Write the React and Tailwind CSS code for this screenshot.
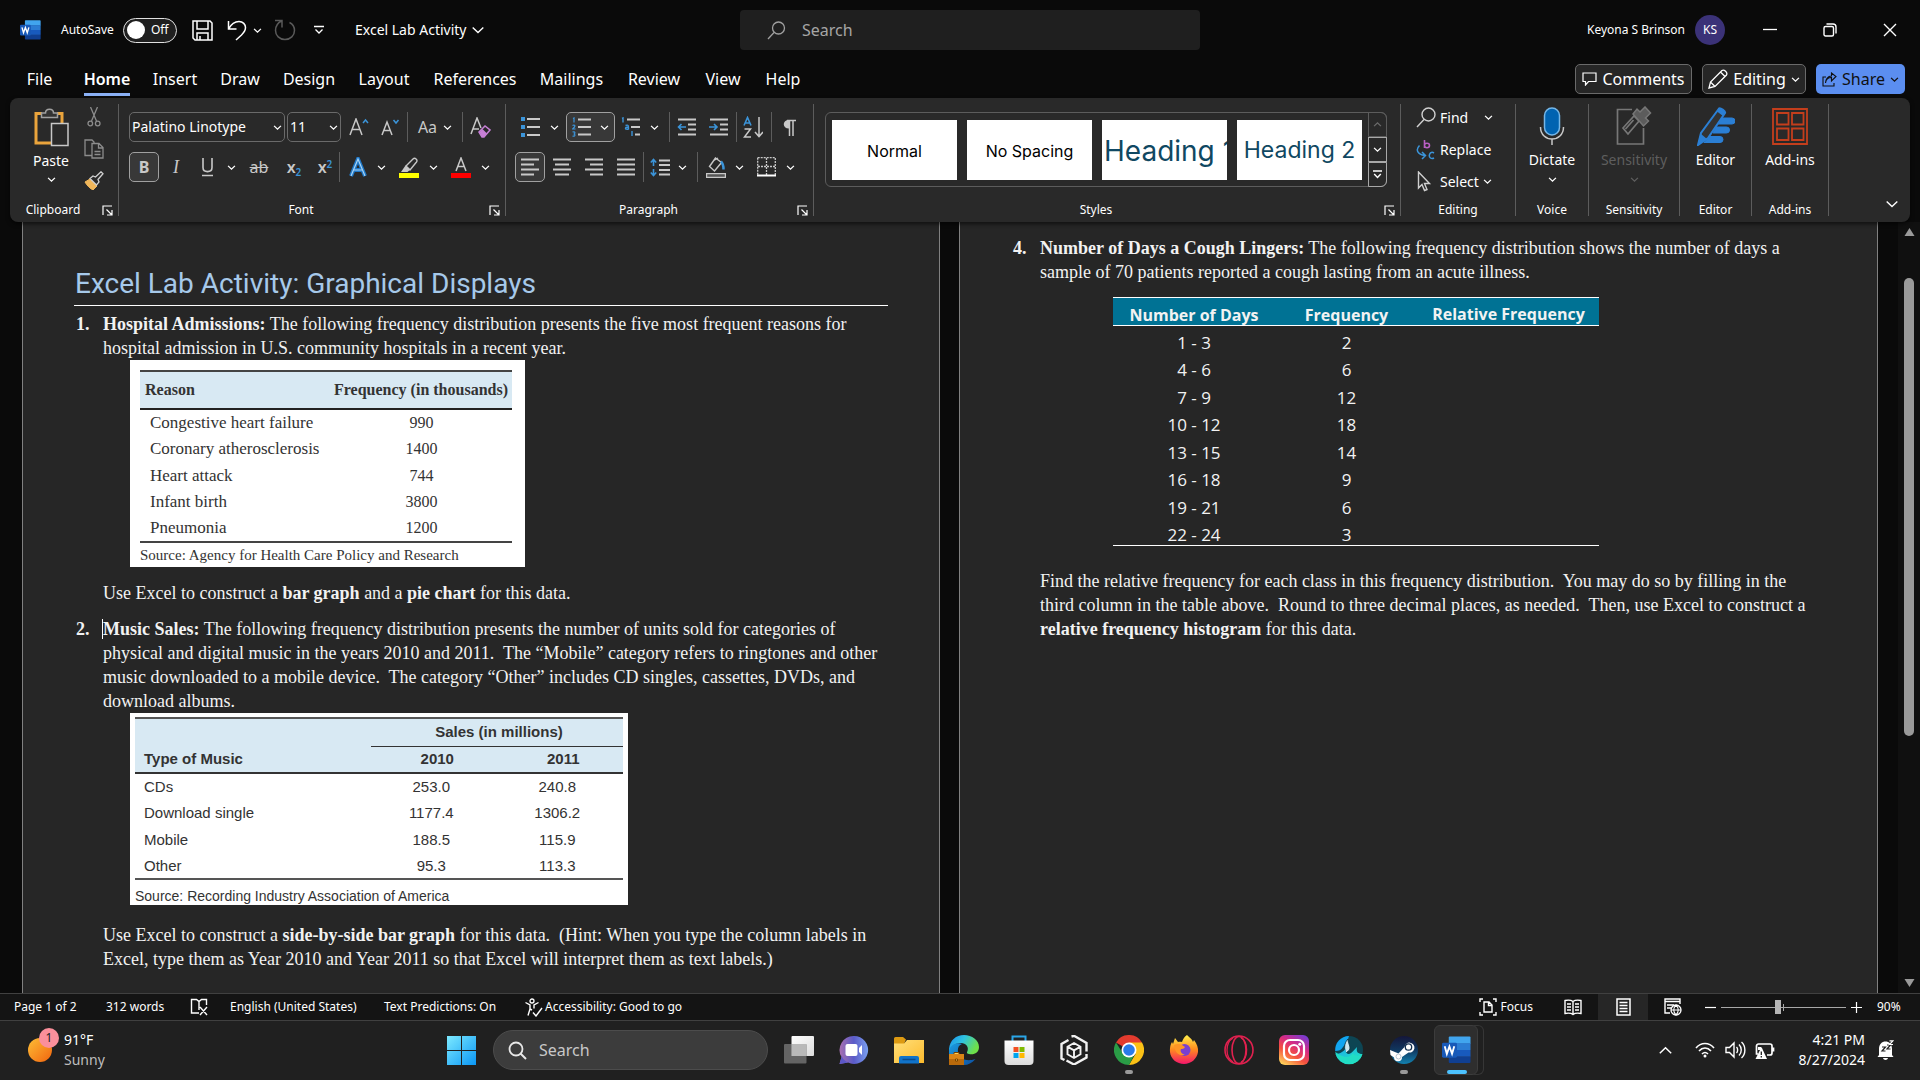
import React from "react";

/* ---------- small shared pieces ---------- */

const Svg = ({ w, h, vb, children, className = "" }) => (
  <svg
    width={w}
    height={h}
    viewBox={vb || `0 0 ${w} ${h}`}
    fill="none"
    stroke="currentColor"
    className={`shrink-0 ${className}`}
    aria-hidden="true"
  >
    {children}
  </svg>
);

const Chevron = ({ w = 9, className = "" }) => (
  <Svg w={w} h={w} vb="0 0 10 10" className={className}>
    <path d="M1.2 3.2 5 6.8l3.8-3.6" strokeWidth={w > 10 ? "1" : "1.5"} />
  </Svg>
);

const Rule = ({ className = "" }) => <span className={`h-[30px] w-px shrink-0 bg-[#5c5c5c] ${className}`} />;

const Tool = ({ label, className = "w-8", boxed = false, children }) => (
  <button
    type="button"
    aria-label={label}
    className={`flex h-[30px] shrink-0 items-center justify-center text-[#c8c8c8] ${
      boxed ? "rounded-[5px] border border-[#a0a0a0] bg-[#383838]" : ""
    } ${className}`}
  >
    {children}
  </button>
);

const Launcher = ({ label }) => (
  <button type="button" aria-label={label} className="flex w-[22px] shrink-0 items-center justify-center text-white">
    <Svg w={11} h={11}>
      <path d="M1 10V1h9M4.500 4.500l5 5M10 5v5H5" strokeWidth="1.2" />
    </Svg>
  </button>
);

const Group = ({ name, launcher, className = "", children }) => (
  <section className={`flex h-[112px] shrink-0 flex-col justify-between border-r border-[#5c5c5c] ${className}`}>
    <div>{children}</div>
    <div className="flex items-center">
      <span className="flex-1 text-center text-xs leading-3 text-white">{name}</span>
      {launcher && <Launcher label={`${name} settings`} />}
    </div>
  </section>
);

const WordIcon = ({ w, h }) => (
  <Svg w={w} h={h} vb="0 0 30 28">
    <g stroke="none">
      <path d="M8 0h20.500a1 1 0 0 1 1 1v6.500H7V1a1 1 0 0 1 1-1z" fill="#41a5ee" />
      <path d="M7 7h22.500v7H7z" fill="#2b7cd3" />
      <path d="M7 14h22.500v7H7z" fill="#185abd" />
      <path d="M7 21h22.500v5.500a1 1 0 0 1-1 1H8a1 1 0 0 1-1-1z" fill="#103f91" />
      <rect x="0" y="6.500" width="15.500" height="15.500" rx="1.500" fill="#1859b8" />
      <path d="M2.800 10.200 5 18l2.700-7.600L10.400 18l2.300-7.800" stroke="#fff" strokeWidth="1.900" fill="none" />
    </g>
  </Svg>
);

/* ---------- title bar ---------- */

function TitleBar() {
  return (
    <header className="grid h-[60px] shrink-0 grid-cols-[740px_1fr_1fr] items-center text-white">
      <div className="flex items-center pl-5">
        <WordIcon w={21} h={20} />
        <label className="ml-5 flex items-center text-xs">
          <span className="w-[62px]">AutoSave</span>
          <input type="checkbox" className="peer sr-only" />
          <span className="flex h-[25px] w-[54px] items-center gap-[6px] rounded-full border border-[#e0e0e0] bg-[#1f1f1f] pl-[3px] text-xs">
            <span className="size-[18px] rounded-full bg-white" />
            Off
          </span>
        </label>
        <button type="button" aria-label="Save" className="ml-[15px]">
          <Svg w={21} h={21}>
            <path d="M1 1h17l2 2v17H3l-2-2zM5 1v8h11V1M5 20v-7h11v7M8 20v-4" strokeWidth="1.500" />
          </Svg>
        </button>
        <button type="button" aria-label="Undo" className="ml-[14px] flex items-center gap-[6px]">
          <Svg w={20} h={21}>
            <path d="M1.500 1v8h8M1.500 9C4 4.500 8 1.500 12 1.500c4 0 6.500 3 6.500 6 0 3-1.500 5-4 7.500L9 20" strokeWidth="1.500" />
          </Svg>
          <Chevron w={9} />
        </button>
        <button type="button" aria-label="Redo" className="ml-3 text-[#5a5a5a]">
          <Svg w={22} h={22}>
            <path d="M1 1.500h7v7M7.500 2C3.500 4 1.500 7.500 1.500 11.500c0 5 4 9 9.500 9s9.500-4 9.500-9c0-3.500-2-6.500-5-8" strokeWidth="1.500" />
          </Svg>
        </button>
        <button type="button" aria-label="Customize toolbar" className="ml-[18px]">
          <Svg w={10} h={10}>
            <path d="M0 1.500h10M1.500 4.500 5 8l3.500-3.500" strokeWidth="1.300" />
          </Svg>
        </button>
        <button type="button" className="ml-[31px] flex items-center gap-[5px] text-sm">
          Excel Lab Activity
          <Chevron w={14} />
        </button>
      </div>
      <label className="flex h-10 w-[460px] items-center gap-4 rounded-[4px] bg-[#1f1f1f] pl-[27px] text-[#a0a0a0]">
        <Svg w={19} h={19}>
          <circle cx="11.500" cy="7" r="6" strokeWidth="1.300" />
          <path d="M7 11.500 1 18" strokeWidth="1.300" />
        </Svg>
        <input
          aria-label="Search"
          placeholder="Search"
          className="min-w-0 flex-1 bg-transparent text-base outline-none placeholder:text-[#a6a6a6]"
        />
      </label>
      <div className="flex items-center justify-end pr-[23px]">
        <span className="text-xs">Keyona S Brinson</span>
        <span className="ml-[10px] flex size-[30px] items-center justify-center rounded-full bg-[#3b3278] text-xs">KS</span>
        <button type="button" aria-label="Minimize" className="ml-[38px]">
          <Svg w={14} h={14}>
            <path d="M0 6.500h14" strokeWidth="1.300" />
          </Svg>
        </button>
        <button type="button" aria-label="Restore" className="ml-[46px]">
          <Svg w={14} h={14}>
            <rect x="1" y="3.500" width="9.500" height="9.500" rx="1.500" strokeWidth="1.400" />
            <path d="M3.500 1h6.500a3 3 0 0 1 3 3v6.500" strokeWidth="1.400" />
          </Svg>
        </button>
        <button type="button" aria-label="Close" className="ml-[46px]">
          <Svg w={14} h={14}>
            <path d="m1 1 12 12M13 1 1 13" strokeWidth="1.400" />
          </Svg>
        </button>
      </div>
    </header>
  );
}

/* ---------- tab row ---------- */

const TABS = [
  ["File", "w-[71px]"],
  ["Home", "w-[64px]"],
  ["Insert", "w-[72px]"],
  ["Draw", "w-[58px]"],
  ["Design", "w-[80px]"],
  ["Layout", "w-[70px]"],
  ["References", "w-[112px]"],
  ["Mailings", "w-[81px]"],
  ["Review", "w-[84px]"],
  ["View", "w-[54px]"],
  ["Help", "w-[66px]"],
];

function TabRow() {
  return (
    <nav className="flex h-[38px] shrink-0 items-center justify-between pr-[15px] pl-1 text-white">
      <div className="flex">
        {TABS.map(([t, w]) => (
          <button key={t} type="button" className={`flex flex-col items-center pt-[3px] text-base leading-7 ${w}`}>
            <span className={t === "Home" ? "border-b-[3px] border-[#8ab0f5] font-semibold" : "border-b-[3px] border-transparent"}>
              {t}
            </span>
          </button>
        ))}
      </div>
      <div className="flex gap-[10px] text-base">
        <button type="button" className="flex h-[30px] w-[117px] items-center justify-center gap-[5px] rounded-[5px] border border-[#6a6a6a] bg-[#262626]">
          <Svg w={15} h={14}>
            <path d="M1 1h13v8.500H6.500L3.500 13V9.500H1z" strokeWidth="1.200" />
          </Svg>
          <span>Comments</span>
        </button>
        <button type="button" className="flex h-[30px] w-[104px] items-center justify-center gap-[5px] rounded-[5px] border border-[#6a6a6a] bg-[#262626]">
          <Svg w={20} h={20}>
            <path d="m1 19 1.500-6L14 1.500c2-1.500 6 2 4.500 4.500L7 17.500zM2.500 13 7 17.500M12.500 3 17 7.500" strokeWidth="1.300" />
          </Svg>
          <span>Editing</span>
          <Chevron w={9} />
        </button>
        <button type="button" className="flex h-[30px] w-[89px] items-center justify-center gap-[5px] rounded-[5px] bg-[#5b8ef0] text-[#101010]">
          <Svg w={15} h={15}>
            <path d="M4 5H1v9h11v-3M3.500 11c.5-4 3-5.500 6-5.500V9L14 4.500 9.500 1v3C6 4 3.500 7 3.500 11z" strokeWidth="1.100" />
          </Svg>
          <span>Share</span>
          <Chevron w={9} />
        </button>
      </div>
    </nav>
  );
}

/* ---------- ribbon ---------- */

const ACCENT = "#3b94d9";

const lines = (rows) =>
  rows.map(([x1, x2], i) => <path key={i} d={`M${x1} ${i * 5 + 1.5}H${x2}`} strokeWidth="2" />);

const Align = ({ rows }) => (
  <Svg w={18} h={18}>
    {lines(rows)}
  </Svg>
);

function ClipboardGroup() {
  return (
    <Group name="Clipboard" launcher className="w-[109px]">
      <div className="flex pl-[19px] pt-[3px]">
        <button type="button" className="flex w-[44px] flex-col items-center text-sm text-white">
          <Svg w={36} h={40}>
            <path d="M9 6.500H3v29.500h15M24 6.500h5V16" stroke="#eaa43c" strokeWidth="3" />
            <path d="M8.500 10.500V6h4c0-5 8-5 8 0h4v4.500z" stroke="#a0a0a0" strokeWidth="1.500" fill="#333" />
            <rect x="18.500" y="16.500" width="16.500" height="22" stroke="#c8c8c8" strokeWidth="1.500" fill="#292929" />
          </Svg>
          <span className="mt-1 leading-5">Paste</span>
          <Chevron w={9} className="mt-1" />
        </button>
        <div className="flex w-[41px] flex-col items-center gap-3 text-[#8c8c8c]">
          <button type="button" aria-label="Cut">
            <Svg w={14} h={20}>
              <path d="M3.500 0 9.500 14M10.500 0 4.500 14" strokeWidth="1.300" />
              <circle cx="3.300" cy="16.500" r="2.300" strokeWidth="1.300" />
              <circle cx="10.700" cy="16.500" r="2.300" strokeWidth="1.300" />
            </Svg>
          </button>
          <button type="button" aria-label="Copy">
            <Svg w={20} h={20}>
              <path d="M8 16.500H1V1h7l2 2v2M8 4.500h7l4 4V19H8zM14.500 4.500V9H19M10.500 12.500h6M10.500 15.500h6" strokeWidth="1.300" />
            </Svg>
          </button>
          <button type="button" aria-label="Format painter">
            <Svg w={20} h={19}>
              <path d="m1 11 5-3 7 7-4 4c-2-1-6-4-8-8z" fill="#f0b65a" stroke="#f0b65a" />
              <path d="m6 7.500 3-2.500 2.500 1L17 .8l2 2-5 5.700 1 2.500-2.500 3z" stroke="#d0d0d0" strokeWidth="1.300" fill="#292929" />
            </Svg>
          </button>
        </div>
      </div>
    </Group>
  );
}

function Combo({ label, value, className, chev }) {
  return (
    <label className={`relative flex h-[30px] items-center rounded-[5px] border border-[#6a6a6a] ${className}`}>
      <select
        aria-label={label}
        className="h-full w-full appearance-none bg-transparent pl-[2px] text-sm text-white outline-none"
        defaultValue={value}
      >
        <option>{value}</option>
      </select>
      <Chevron w={9} className={`pointer-events-none absolute text-white ${chev}`} />
    </label>
  );
}

function FontGroup() {
  return (
    <Group name="Font" launcher className="w-[387px]">
      <div className="flex flex-col gap-[10px] pt-2 pl-[10px]">
        <div className="flex items-center">
          <Combo label="Font name" value="Palatino Linotype" className="w-[156px]" chev="right-[2px]" />
          <Combo label="Font size" value="11" className="ml-0.5 w-[54px]" chev="right-[2px]" />
          <Tool label="Increase font size" className="w-9">
            <Svg w={20} h={18}>
              <path d="m1 17 6-16 6 16M3.200 11.500h7.600" strokeWidth="1.500" />
              <path d="m14 5 2.500-3L19 5" stroke={ACCENT} strokeWidth="1.500" />
            </Svg>
          </Tool>
          <Tool label="Decrease font size" className="w-7">
            <Svg w={20} h={18}>
              <path d="M1 17 6 4l5 13M2.800 12.500h6.400" strokeWidth="1.500" />
              <path d="m12.500 2 2.500 3 2.500-3" stroke={ACCENT} strokeWidth="1.500" />
            </Svg>
          </Tool>
          <Rule className="ml-0.5" />
          <Tool label="Change case" className="w-[54px] gap-[6px]">
            <span className="text-base">Aa</span>
            <Chevron w={9} className="text-white" />
          </Tool>
          <Rule />
          <Tool label="Clear formatting" className="w-[34px]">
            <Svg w={21} h={21}>
              <path d="m1 17 6-16 4 10M3 12h6" strokeWidth="1.500" />
              <path d="m9 15 6-6 5 4-6 7h-2z" stroke="#c77fd6" strokeWidth="1.500" />
              <path d="m9.500 15 3-3 4.500 4.500-3 3.500h-2z" fill="#c77fd6" stroke="none" />
            </Svg>
          </Tool>
        </div>
        <div className="flex items-center">
          <Tool label="Bold" boxed className="w-[30px]">
            <span className="text-base font-bold">B</span>
          </Tool>
          <Tool label="Italic" className="w-[34px]">
            <span className="font-['Liberation_Serif',serif] text-lg italic">I</span>
          </Tool>
          <Tool label="Underline" className="w-7">
            <Svg w={13} h={20}>
              <path d="M2 1v9.500c0 5.500 9 5.500 9 0V1M1 18.500h11" strokeWidth="1.600" />
            </Svg>
          </Tool>
          <Tool label="Underline options" className="w-5 text-white">
            <Chevron />
          </Tool>
          <Tool label="Strikethrough" className="w-9">
            <span className="text-base line-through">ab</span>
          </Tool>
          <Tool label="Subscript" className="w-[34px]">
            <span className="text-base font-semibold">
              x<sub className="text-[10px] text-[#3b94d9]">2</sub>
            </span>
          </Tool>
          <Tool label="Superscript" className="w-7">
            <span className="text-base font-semibold">
              x<sup className="text-[10px] text-[#3b94d9]">2</sup>
            </span>
          </Tool>
          <Rule />
          <Tool label="Text effects" className="w-9">
            <Svg w={18} h={20}>
              <path d="m2 19 7-17 7 17M5 13h8" stroke="#1f78c8" strokeWidth="4" />
              <path d="m2 19 7-17 7 17M5 13h8" stroke="#a8d4f5" strokeWidth="1.200" />
            </Svg>
          </Tool>
          <Tool label="Text effects options" className="w-[10px] text-white">
            <Chevron />
          </Tool>
          <Tool label="Highlight colour" className="ml-1 w-[38px]">
            <Svg w={20} h={21}>
              <path d="m7 9 7-7c2-2 5 1 3.500 3L11 13z" strokeWidth="1.400" />
              <path d="m6.500 8.500 5 4-3 2.500H2z" fill="currentColor" stroke="none" />
              <path d="M0 16h20v5H0z" fill="#ff0" stroke="none" />
            </Svg>
          </Tool>
          <Tool label="Highlight options" className="w-[10px] text-white">
            <Chevron />
          </Tool>
          <Tool label="Font colour" className="ml-1 w-[38px]">
            <Svg w={20} h={21}>
              <path d="m5 14 5-13 5 13M6.800 9.500h6.400" strokeWidth="1.500" />
              <path d="M0 16h20v5H0z" fill="#f00" stroke="none" />
            </Svg>
          </Tool>
          <Tool label="Font colour options" className="w-[10px] text-white">
            <Chevron />
          </Tool>
        </div>
      </div>
    </Group>
  );
}

function ParagraphGroup() {
  return (
    <Group name="Paragraph" launcher className="w-[308px]">
      <div className="flex flex-col gap-[10px] pt-2 pl-[9px]">
        <div className="flex items-center">
          <Tool label="Bullets" className="w-[30px]">
            <Svg w={19} h={20}>
              <path d="M0 2h4M0 10h4M0 18h4" stroke={ACCENT} strokeWidth="4" />
              <path d="M6 2h13M6 10h13M6 18h13" strokeWidth="2" />
            </Svg>
          </Tool>
          <Tool label="Bullet options" className="w-[18px] text-white">
            <Chevron />
          </Tool>
          <Tool label="Numbering" boxed className="ml-[3px] w-[49px] gap-[9px]">
            <Svg w={19} h={20}>
              <path d="M1 1.500 2 1v4.500M.5 8.500c1.500-1 3 0 2 1.500L.5 12h3M.5 15c3-1 3 2 1 2 2 0 2 3-1 2" stroke={ACCENT} strokeWidth="1.200" />
              <path d="M6 2.500h13M6 10h13M6 17.500h13" strokeWidth="2" />
            </Svg>
            <Chevron className="text-white" />
          </Tool>
          <Tool label="Multilevel list" className="w-[31px]">
            <Svg w={20} h={20}>
              <path d="M1 1.500 2 1v4.500M4.500 8.500c3-1 3 0 3 3.500-4 1-4-2 0-2M11 11.500v0M11 14v5" stroke={ACCENT} strokeWidth="1.400" />
              <path d="M6 2.500h13M10 10h9M14 17.500h5" strokeWidth="2" />
            </Svg>
          </Tool>
          <Tool label="Multilevel options" className="w-4 text-white">
            <Chevron />
          </Tool>
          <Rule className="ml-[7px]" />
          <Tool label="Decrease indent" className="w-8">
            <Svg w={19} h={18}>
              <path d="M1 1.500h18M11 6.500h8M11 11.500h8M1 16.500h18" strokeWidth="2" />
              <path d="M9 9H1.500M4.500 6l-3 3 3 3" stroke={ACCENT} strokeWidth="1.600" />
            </Svg>
          </Tool>
          <Tool label="Increase indent" className="w-8">
            <Svg w={19} h={18}>
              <path d="M1 1.500h18M11 6.500h8M11 11.500h8M1 16.500h18" strokeWidth="2" />
              <path d="M0 9h8M5 6l3 3-3 3" stroke={ACCENT} strokeWidth="1.600" />
            </Svg>
          </Tool>
          <Rule className="ml-0.5" />
          <Tool label="Sort" className="w-8">
            <Svg w={20} h={22}>
              <path d="m1 9.500 3.500-8 3.500 8M2.300 7h4.500" stroke={ACCENT} strokeWidth="1.600" />
              <path d="M1.500 13h6L1.500 21h6.500M16 1v19M12 16l4 4.500 4-4.500" strokeWidth="1.500" />
            </Svg>
          </Tool>
          <Rule className="ml-0.5" />
          <Tool label="Show formatting marks" className="w-[34px]">
            <Svg w={14} h={17}>
              <path d="M7 1C0 1 0 9.500 7 9.500z" fill="currentColor" stroke="none" />
              <path d="M5 1.500h9M7.500 1v16M11 1v16" strokeWidth="1.500" />
            </Svg>
          </Tool>
        </div>
        <div className="flex items-center">
          <Tool label="Align left" boxed className="w-[30px]">
            <Align rows={[[0, 18], [0, 13], [0, 18], [0, 13]]} />
          </Tool>
          <Tool label="Center" className="w-[34px]">
            <Align rows={[[0, 18], [2, 16], [0, 18], [2, 16]]} />
          </Tool>
          <Tool label="Align right" className="w-[30px]">
            <Align rows={[[0, 18], [5, 18], [0, 18], [5, 18]]} />
          </Tool>
          <Tool label="Justify" className="w-[34px]">
            <Align rows={[[0, 18], [0, 18], [0, 18], [0, 18]]} />
          </Tool>
          <Rule />
          <Tool label="Line spacing" className="w-[31px]">
            <Svg w={20} h={19}>
              <path d="M9 2.500h11M9 7h11M9 12h11M9 16.500h11" strokeWidth="2" />
              <path d="M3.500 2v6M3.500 11v6M.8 4.500 3.500 1.500 6.200 4.500M.8 14.500l2.700 3 2.700-3" stroke={ACCENT} strokeWidth="1.600" />
            </Svg>
          </Tool>
          <Tool label="Line spacing options" className="w-[14px] text-white">
            <Chevron />
          </Tool>
          <Rule className="ml-2" />
          <Tool label="Shading" className="w-[35px]">
            <Svg w={20} h={21}>
              <path d="m9.500 1-6 8.500 5 4.500 7-8.500zM7 4l5-3" strokeWidth="1.400" />
              <path d="M15 4.500c2 2 2.500 5 2.500 8" stroke={ACCENT} strokeWidth="2.500" />
              <path d="M.6 16.600h18.800v3.800H.6z" fill="#555" strokeWidth="1.200" />
            </Svg>
          </Tool>
          <Tool label="Shading options" className="w-3 text-white">
            <Chevron />
          </Tool>
          <Tool label="Borders" className="ml-0.5 w-[38px]">
            <Svg w={19} h={20}>
              <path d="M.7.700h17.600V18M.7.700V18M9.500 1v17M1 9.500h17" strokeWidth="1.300" strokeDasharray="2 1" />
              <path d="M0 18.500h19" stroke="#fff" strokeWidth="2" />
            </Svg>
          </Tool>
          <Tool label="Border options" className="w-[10px] text-white">
            <Chevron />
          </Tool>
        </div>
      </div>
    </Group>
  );
}

const StyleCard = ({ className, children }) => (
  <button
    type="button"
    className={`h-[60px] min-w-0 flex-1 overflow-hidden bg-white px-[2px] pt-[2px] font-[Inter,sans-serif] whitespace-nowrap ${className}`}
  >
    {children}
  </button>
);

function StylesGroup() {
  return (
    <Group name="Styles" launcher className="min-w-[400px] flex-1">
      <div className="mt-2 mr-[13px] ml-[11px] flex h-[75px] rounded-[6px] border border-[#5c5c5c]">
        <div className="flex min-w-0 flex-1 items-center gap-[10px] px-[6px]">
          <StyleCard className="text-base text-black">Normal</StyleCard>
          <StyleCard className="text-base text-black">No Spacing</StyleCard>
          <StyleCard className="text-left text-[28px] text-[#104862]">Heading 1</StyleCard>
          <StyleCard className="text-[23px] text-[#104862]">Heading 2</StyleCard>
        </div>
        <div className="-my-px -mr-px flex w-[19px] flex-col text-white">
          <button type="button" aria-label="Previous styles" className="flex flex-1 items-center justify-center rounded-tr-[6px] border border-[#5c5c5c] text-[#6a6a6a]">
            <Chevron className="rotate-180" />
          </button>
          <button type="button" aria-label="Next styles" className="flex flex-1 items-center justify-center border border-[#a8a8a8]">
            <Chevron />
          </button>
          <button type="button" aria-label="More styles" className="flex flex-1 items-center justify-center rounded-br-[6px] border border-[#a8a8a8]">
            <Svg w={9} h={9}>
              <path d="M0 1h9M1.200 4 4.500 7.500 7.800 4" strokeWidth="1.400" />
            </Svg>
          </button>
        </div>
      </div>
    </Group>
  );
}

function EditingGroup() {
  return (
    <Group name="Editing" className="w-[115px]">
      <div className="flex flex-col gap-3 pl-[15px] text-sm leading-5 text-white">
        <button type="button" className="flex h-5 items-center pt-[7px]">
          <Svg w={20} h={21} className="text-[#d0d0d0]">
            <circle cx="12.500" cy="7.500" r="6.500" strokeWidth="1.400" />
            <path d="M8 12.500 1 20" strokeWidth="1.400" />
          </Svg>
          <span className="ml-1">Find</span>
          <Chevron className="ml-4" />
        </button>
        <button type="button" className="flex h-5 items-center pt-[7px]">
          <Svg w={20} h={22}>
            <path d="M8.500 1v8M8.500 6.500c0-3 5-3 5 0s-5 3-5 0" stroke="#b95fc4" strokeWidth="1.600" />
            <path d="M3.500 6.500C-.5 10.500 1 15.500 9 16.500M6 13l3.500 3.500L6 20M18 14c-4-2.500-6 3-3.500 5 1 .8 2.500.6 3.500 0" stroke={ACCENT} strokeWidth="1.500" />
          </Svg>
          <span className="ml-1">Replace</span>
        </button>
        <button type="button" className="flex h-5 items-center pt-[7px]">
          <Svg w={20} h={21} className="text-[#d0d0d0]">
            <path d="M2.500 1v16l3.500-3.500 2.500 6 2.500-1-2.500-6h5z" strokeWidth="1.400" />
          </Svg>
          <span className="ml-1">Select</span>
          <Chevron className="ml-1" />
        </button>
      </div>
    </Group>
  );
}

const BigTool = ({ label, dim, chev, icon }) => (
  <button
    type="button"
    className={`flex w-full flex-col items-center pt-[2px] text-sm ${dim ? "text-[#5e5e5e]" : "text-white"}`}
  >
    {icon}
    <span className="mt-1 leading-5">{label}</span>
    {chev && <Chevron className="mt-[5px]" />}
  </button>
);

function Ribbon() {
  return (
    <div className="relative z-10 mx-[10px] flex h-[124px] shrink-0 items-start rounded-lg bg-[#292929] pt-[6px] shadow-[0_2px_4px_rgba(0,0,0,0.6)]">
      <ClipboardGroup />
      <FontGroup />
      <ParagraphGroup />
      <StylesGroup />
      <EditingGroup />
      <Group name="Voice" className="w-[73px]">
        <BigTool
          label="Dictate"
          chev
          icon={
            <Svg w={26} h={40}>
              <rect x="5.500" y="2" width="15" height="27" rx="7.500" fill="#0063b1" stroke="#75b6e7" strokeWidth="1.500" />
              <path d="M1.500 21c0 16 23 16 23 0M13 33v6" stroke="#c8c8c8" strokeWidth="1.500" />
            </Svg>
          }
        />
      </Group>
      <Group name="Sensitivity" className="w-[91px]">
        <BigTool
          label="Sensitivity"
          dim
          chev
          icon={
            <Svg w={36} h={40} className="text-[#777]">
              <path d="M16 3.500H1.500V38h26V22" strokeWidth="1.700" />
              <path d="m7 22 11-12 5 5-11 13zM9.500 23l8-9" strokeWidth="1.700" />
              <path d="m17 8 4-5 3 3 5-5 5.500 6-5 5 3 3-5 5z" fill="#5c5c5c" strokeWidth="1.500" />
            </Svg>
          }
        />
      </Group>
      <Group name="Editor" className="w-[72px]">
        <BigTool
          label="Editor"
          icon={
            <Svg w={38} h={40}>
              <path d="M24 12h11a3 3 0 0 1 0 6H21zM19 21h10.500a3 3 0 0 1 0 6H16zM13 30.500h10a3 3 0 0 1 0 6H7z" fill="#2b7fd4" stroke="#2b7fd4" />
              <path d="M1 39 4 27 22 2.500c1-1.200 7 2.500 6 4.500L11 32z" fill="#333" stroke="#2b7fd4" strokeWidth="2" />
              <path d="m1 39 3-11 6 5zM22 2.500c1-1.200 7 2.500 6 4.500l-2 3-6-4.500z" fill="#2b7fd4" stroke="none" />
            </Svg>
          }
        />
      </Group>
      <Group name="Add-ins" className="w-[77px]">
        <BigTool
          label="Add-ins"
          icon={
            <Svg w={36} h={40} className="text-[#c43e1c]">
              <path d="M1 3h34v35H1zM5 7h11.500v11.500H5zM20 7h11.500v11.500H20zM5 22.500h11.500V34H5zM20 22.500h11.500V34H20z" strokeWidth="1.800" />
            </Svg>
          }
        />
      </Group>
      <div className="flex h-[111px] w-[81px] shrink-0 items-end justify-end pr-[11px] pb-1">
        <button type="button" aria-label="Collapse ribbon" className="text-white">
          <Chevron w={14} />
        </button>
      </div>
    </div>
  );
}

/* ---------- document ---------- */

const ADMISSIONS = [
  ["Congestive heart failure", "990"],
  ["Coronary atherosclerosis", "1400"],
  ["Heart attack", "744"],
  ["Infant birth", "3800"],
  ["Pneumonia", "1200"],
];

const SALES = [
  ["CDs", "253.0", "240.8"],
  ["Download single", "1177.4", "1306.2"],
  ["Mobile", "188.5", "115.9"],
  ["Other", "95.3", "113.3"],
];

const COUGH = [
  ["1 - 3", "2"],
  ["4 - 6", "6"],
  ["7 - 9", "12"],
  ["10 - 12", "18"],
  ["13 - 15", "14"],
  ["16 - 18", "9"],
  ["19 - 21", "6"],
  ["22 - 24", "3"],
];

function AdmissionsFigure() {
  return (
    <figure className="ml-[27px] h-[207px] w-[395px] bg-white pt-[10px] pl-[10px] font-['Liberation_Serif',serif] text-base leading-5 text-[#333]">
      <table className="w-[372px] border-collapse border-y-2 border-[#444]">
        <thead>
          <tr className="h-[38px] border-b-2 border-[#222] bg-[#d8e9f3]">
            <th className="pl-[5px] text-left">Reason</th>
            <th className="w-[183px] pr-1 text-right whitespace-nowrap">Frequency (in thousands)</th>
          </tr>
        </thead>
        <tbody>
          {ADMISSIONS.map(([a, b], i) => (
            <tr key={a} className={i % 2 ? "h-[26px]" : "h-[27px]"}>
              <td className="pl-[10px] text-[17px]">{a}</td>
              <td className="pl-[2px] text-center">{b}</td>
            </tr>
          ))}
        </tbody>
      </table>
      <figcaption className="text-[15px] leading-6">Source: Agency for Health Care Policy and Research</figcaption>
    </figure>
  );
}

function SalesFigure() {
  return (
    <figure className="ml-[27px] h-[192px] w-[498px] bg-white px-[5px] pt-1 font-['Liberation_Sans',sans-serif] text-[15px] leading-5 text-[#333]">
      <table className="w-full border-collapse border-y-2 border-[#555]">
        <thead>
          <tr className="h-7 bg-[#d8e9f3]">
            <th className="w-[236px]" />
            <th colSpan="2" className="border-b border-[#333] pl-1">
              Sales (in millions)
            </th>
          </tr>
          <tr className="h-[27px] border-b-2 border-[#333] bg-[#d8e9f3]">
            <th className="pl-[9px] text-left">Type of Music</th>
            <th className="pl-2">2010</th>
            <th className="pl-2">2011</th>
          </tr>
        </thead>
        <tbody>
          {SALES.map(([a, b, c], i) => (
            <tr key={a} className={i % 2 ? "h-[26px]" : "h-[27px]"}>
              <td className="pl-[9px]">{a}</td>
              <td className="pr-1 text-center">{b}</td>
              <td className="pr-1 text-center">{c}</td>
            </tr>
          ))}
        </tbody>
      </table>
      <figcaption className="pt-[6px] text-sm">Source: Recording Industry Association of America</figcaption>
    </figure>
  );
}

const Line = ({ children }) => <span className="block whitespace-pre">{children}</span>;

const Item = ({ n, className = "", children }) => (
  <div className={`flex ${className}`}>
    <span className="w-[27px] shrink-0 font-bold">{n}.</span>
    <div>{children}</div>
  </div>
);

function Document() {
  return (
    <div className="flex min-h-0 flex-1 overflow-hidden bg-[#0a0a0a]">
      <main className="flex min-w-0 flex-1 gap-[19px] pl-[22px] font-['Liberation_Serif',serif] text-lg leading-6 text-[#f2f2f2]">
        <article className="min-w-0 flex-1 border-x border-[#808080] bg-[#262626] pr-[51px] pl-[51px]">
          <h1 className="mt-10 border-b border-white pl-px font-[Roboto,sans-serif] text-[28px] leading-[43px] text-[#a6c9ea]">
            Excel Lab Activity: Graphical Displays
          </h1>
          <Item n={1} className="mt-[6px] pl-[2px]">
            <p>
              <Line>
                <b>Hospital Admissions:</b> The following frequency distribution presents the five most frequent reasons for
              </Line>
              <Line>hospital admission in U.S. community hospitals in a recent year.</Line>
            </p>
            <AdmissionsFigure />
            <p className="mt-[14px]">
              Use Excel to construct a <b>bar graph</b> and a <b>pie chart</b> for this data.
            </p>
          </Item>
          <Item n={2} className="mt-3 pl-[2px]">
            <p>
              <Line>
                <b className="-ml-px border-l border-white">Music Sales:</b> The following frequency distribution presents the number of units sold for categories of
              </Line>
              <Line>physical and digital music in the years 2010 and 2011.  The “Mobile” category refers to ringtones and other</Line>
              <Line>music downloaded to a mobile device.  The category “Other” includes CD singles, cassettes, DVDs, and</Line>
              <Line>download albums.</Line>
            </p>
            <SalesFigure />
            <p className="mt-[18px]">
              <Line>
                Use Excel to construct a <b>side-by-side bar graph</b> for this data.  (Hint: When you type the column labels in
              </Line>
              <Line>Excel, type them as Year 2010 and Year 2011 so that Excel will interpret them as text labels.)</Line>
            </p>
          </Item>
        </article>
        <article className="min-w-0 flex-1 border-x border-[#808080] bg-[#262626] pr-[50px] pl-[53px]">
          <Item n={4} className="mt-[14px]">
            <p>
              <Line>
                <b>Number of Days a Cough Lingers:</b> The following frequency distribution shows the number of days a
              </Line>
              <Line>sample of 70 patients reported a cough lasting from an acute illness.</Line>
            </p>
            <table className="mt-[13px] ml-[73px] w-[486px] border-collapse border-y border-white text-center font-['Open_Sans',sans-serif] text-[17px] leading-5">
              <thead>
                <tr className="h-7 border-b border-white bg-[#007294] text-base leading-5">
                  <th className="w-[162px] pt-[6px] font-bold">Number of Days</th>
                  <th className="w-[143px] pt-[6px] font-bold">Frequency</th>
                  <th className="pt-1 font-bold whitespace-nowrap">Relative Frequency</th>
                </tr>
              </thead>
              <tbody>
                {COUGH.map(([a, b], i) => (
                  <tr key={a} className={i % 2 ? "h-[27px]" : "h-7"}>
                    <td className="pt-[6px]">{a}</td>
                    <td className="pt-[6px]">{b}</td>
                    <td />
                  </tr>
                ))}
              </tbody>
            </table>
            <p className="mt-[23px]">
              <Line>Find the relative frequency for each class in this frequency distribution.  You may do so by filling in the</Line>
              <Line>third column in the table above.  Round to three decimal places, as needed.  Then, use Excel to construct a</Line>
              <Line>
                <b>relative frequency histogram</b> for this data.
              </Line>
            </p>
          </Item>
        </article>
      </main>
      <aside className="ml-5 flex w-[22px] shrink-0 flex-col items-center bg-[#101010] py-[6px] text-[#9a9a9a]">
        <Svg w={11} h={9}>
          <path d="m5.500 0 5 8h-10z" fill="currentColor" stroke="none" />
        </Svg>
        <div className="mt-[41px] h-[458px] w-[10px] rounded-full bg-[#9a9a9a]" />
        <Svg w={11} h={9} className="mt-auto">
          <path d="m5.500 9 5-8h-10z" fill="currentColor" stroke="none" />
        </Svg>
      </aside>
    </div>
  );
}

/* ---------- status bar ---------- */

function StatusBar() {
  return (
    <footer className="flex h-[28px] shrink-0 items-center border-y border-[#404040] bg-[#141414] pl-[14px] text-xs text-white">
      <span className="w-[92px]">Page 1 of 2</span>
      <span className="w-[84px]">312 words</span>
      <button type="button" aria-label="Proofing" className="w-10">
        <Svg w={20} h={18}>
          <path d="M9 15H1.500V1.500h5L9 3.500l2.500-2h5V7M9 3.500V12M10 9l7 8M17 9l-7 8" strokeWidth="1.400" />
        </Svg>
      </button>
      <span className="w-[154px]">English (United States)</span>
      <span className="w-[140px]">Text Predictions: On</span>
      <button type="button" className="flex items-center gap-[2px]">
        <Svg w={19} h={19}>
          <circle cx="8" cy="3" r="2" strokeWidth="1.300" />
          <path d="M1.500 4.500 6 7v4l-2 6.500M14.500 4.500 10 7v3.500M6 11l2 1M9 14.500l3 3.500 6-8" strokeWidth="1.400" />
        </Svg>
        Accessibility: Good to go
      </button>
      <div className="ml-auto flex h-full items-center">
        <button type="button" className="mr-[15px] flex items-center gap-1">
          <Svg w={18} h={18}>
            <path d="M4 1H1v3M14 1h3v3M4 17H1v-3M14 17h3v-3" strokeWidth="1.400" />
            <path d="M5 4h5l3 3v7H5zM9.500 4v3.500H13" strokeWidth="1.400" />
          </Svg>
          Focus
        </button>
        <button type="button" aria-label="Read mode" className="flex h-full w-[50px] items-center justify-center">
          <Svg w={18} h={17}>
            <path d="M9 2.500C7 1 3.500 1 1 1.500v13c2.500-.5 6-.5 8 1 2-1.500 5.500-1.500 8-1v-13c-2.500-.5-6-.5-8 1zM9 2.500v13" strokeWidth="1.400" />
            <path d="M3 5h4M3 8h4M3 11h4M11 5h4M11 8h4M11 11h4" strokeWidth="1.300" />
          </Svg>
        </button>
        <button type="button" aria-label="Print layout" className="flex h-full w-[50px] items-center justify-center bg-[#262626]">
          <Svg w={15} h={18}>
            <path d="M1 1h13v16H1z" strokeWidth="1.500" />
            <path d="M3.500 4.500h8M3.500 7.500h8M3.500 10.500h8M3.500 13.500h8" strokeWidth="1.400" />
          </Svg>
        </button>
        <button type="button" aria-label="Web layout" className="flex h-full w-[50px] items-center justify-center">
          <Svg w={18} h={18}>
            <path d="M6 15H1V1h15v5M1 3.500h15M3 7h7M3 10h4" strokeWidth="1.400" />
            <circle cx="12" cy="12" r="5" strokeWidth="1.300" />
            <path d="M7 12h10M12 7c-3 3-3 7 0 10M12 7c3 3 3 7 0 10" strokeWidth="1.100" />
          </Svg>
        </button>
        <button type="button" aria-label="Zoom out" className="ml-[7px]">
          <Svg w={11} h={11}>
            <path d="M0 5.500h11" strokeWidth="1.200" />
          </Svg>
        </button>
        <input
          type="range"
          aria-label="Zoom"
          min="0"
          max="100"
          defaultValue="45"
          className="mx-[5px] h-4 w-[125px] appearance-none bg-[linear-gradient(#a8a8a8,#a8a8a8),linear-gradient(#a8a8a8,#a8a8a8)] bg-[length:100%_1px,1px_7px] bg-center bg-no-repeat [&::-webkit-slider-thumb]:h-[14px] [&::-webkit-slider-thumb]:w-[6px] [&::-webkit-slider-thumb]:appearance-none [&::-webkit-slider-thumb]:bg-[#b5b5b5]"
        />
        <button type="button" aria-label="Zoom in">
          <Svg w={11} h={11}>
            <path d="M0 5.500h11M5.500 0v11" strokeWidth="1.200" />
          </Svg>
        </button>
        <span className="mr-[15px] ml-[15px] w-[28px]">90%</span>
      </div>
    </footer>
  );
}

/* ---------- taskbar ---------- */

const Grad = ({ id, stops, x2 = 1, y2 = 1 }) => (
  <linearGradient id={id} x1="0" y1="0" x2={x2} y2={y2}>
    {stops.map((c, i) => (
      <stop key={c + i} offset={i / (stops.length - 1)} stopColor={c} />
    ))}
  </linearGradient>
);

const Brand = ({ children }) => (
  <svg width="30" height="30" viewBox="0 0 30 30" fill="none" aria-hidden="true">
    {children}
  </svg>
);

const APPS = [
  [
    "Task view",
    <Brand>
      <Grad id="tv" stops={["#ffffff", "#dcdcdc"]} />
      <rect x="7.500" y="1" width="22.500" height="20" rx="1" fill="url(#tv)" />
      <rect x="0" y="9" width="22.500" height="19.500" rx="1" fill="#6b6b6b" fillOpacity="0.900" />
      <path d="M7.500 9h15v12h-15z" fill="#b9b9b9" />
    </Brand>,
  ],
  [
    "Chat",
    <Brand>
      <Grad id="chat" stops={["#a86fb0", "#5a5bc8", "#7aa0f0"]} x2={1} y2={0} />
      <path d="M15 1a14 14 0 1 1-6 26.600L.500 29l2-7A14 14 0 0 1 15 1z" fill="url(#chat)" />
      <path d="M2 20a14 14 0 0 0 26 0 14 14 0 0 1-19 7.600L.500 29l2-7z" fill="#5b57c9" />
      <rect x="6.500" y="9" width="12" height="12" rx="2" fill="#fff" />
      <path d="m20 13 3-3v10l-3-3z" fill="#fff" />
    </Brand>,
  ],
  [
    "File Explorer",
    <Brand>
      <Grad id="fold" stops={["#ffdf7a", "#fdbb2d"]} />
      <path d="M0 3.500A1.500 1.500 0 0 1 1.500 2H9l3 2.500L10 9H0z" fill="#dd9a12" />
      <path d="M0 8.500h10l3-3.500h17v23H0z" fill="url(#fold)" />
      <path d="M5 28.500V23a2 2 0 0 1 2-2h16a2 2 0 0 1 2 2v5.500z" fill="#1173c9" />
      <path d="M8.500 24.500h13" stroke="#0a4a8c" strokeWidth="1.500" />
    </Brand>,
  ],
  [
    "Edge",
    <Brand>
      <Grad id="e1" stops={["#1a8ff0", "#2fc3df", "#6ee04a"]} y2={0.400} />
      <Grad id="e2" stops={["#1b9de2", "#0c4fa0"]} />
      <path d="M0 14C1 5 7 0 15 0s15 5 15 12c0 6-5 8-10 7-3-.6-2-2-1.500-3C20 12 17 8 12 8 5 8 1 12 0 19z" fill="url(#e1)" />
      <path d="M0 15c2-6 8-8 13-6-4 1-5 6-3.500 10 2 5 8 8 17 5C23 28 19 30 15 30 6 30-1 24 0 15z" fill="url(#e2)" />
      <path d="M0 19h15v11H0z" fill="#b96a0b" />
      <path d="M0 19h15v5H0z" fill="#d98516" />
      <path d="M5 19v-1.500h5V19M6.500 24h2v2h-2z" stroke="#7a4300" fill="#ffd35a" />
    </Brand>,
  ],
  [
    "Microsoft Store",
    <Brand>
      <Grad id="st" stops={["#ffffff", "#dcdcdc"]} x2={0} />
      <path d="M8.500 6V1.500h13V6" stroke="#2aa6e8" strokeWidth="2" />
      <path d="M.5 5.500h29V26a4 4 0 0 1-4 4h-21a4 4 0 0 1-4-4z" fill="url(#st)" />
      <path d="M9.500 12h5v5h-5z" fill="#f25022" />
      <path d="M15.500 12h5v5h-5z" fill="#7fba00" />
      <path d="M9.500 18h5v5h-5z" fill="#00a4ef" />
      <path d="M15.500 18h5v5h-5z" fill="#ffb900" />
    </Brand>,
  ],
  [
    "Unity Hub",
    <Brand>
      <g stroke="#f2f2f2" strokeWidth="1.900">
        <path d="M5.500 25 2.500 23.500V9L9.500 5M12.500 1.500 15 .8 27.500 8v8.500M27.500 19v3.500L15 29.500 7.500 25.500" strokeWidth="2.400" />
        <path d="m15 8 6.500 3.700v7.600L15 23l-6.500-3.700v-7.600zM8.500 11.700 15 15.400l6.500-3.700M15 15.400V23" />
      </g>
    </Brand>,
  ],
  [
    "Chrome",
    <Brand>
      <path d="M15 15 2 7.500A15 15 0 0 1 28 7.500z" fill="#e33b2e" />
      <path d="M15 7.500h13A15 15 0 0 1 15 30l6.500-11z" fill="#fbc116" />
      <path d="M2 7.500A15 15 0 0 0 15 30l6-11.500L9 18.500z" fill="#2a9c46" />
      <circle cx="15" cy="15" r="7.500" fill="#fff" />
      <circle cx="15" cy="15" r="5.800" fill="#2a7bea" />
    </Brand>,
  ],
  [
    "Firefox",
    <Brand>
      <Grad id="ff" stops={["#fff04a", "#ff8a1e", "#f5156c"]} x2={0} />
      <path d="M18 0c3 3 5 4 6 7l1-2c3 4 4.500 8 4 12-1 7-7 12-14 12S1.500 24 1 17C.7 11 2 9 3 7l1 2 2-6 3 4c1-.5 3-.5 4 0 1-3 2-5 5-7z" fill="url(#ff)" />
      <circle cx="15.500" cy="15" r="6" fill="#7a3fd0" />
      <path d="M5 10c3-1.500 6-1 8 0l3 2c-1 2-3 2-4 2-1 2 0 5 4 5.500-5 2.500-10-1-11-9.500z" fill="#ff9526" />
    </Brand>,
  ],
  [
    "Opera GX",
    <Brand>
      <g stroke="#e0214f" strokeWidth="1.600">
        <circle cx="15" cy="15" r="14" />
        <ellipse cx="15" cy="15" rx="7" ry="13.500" />
        <path d="M17 3c7 3 8 20 0 24M9 3C1 8 1 22 9 27" strokeWidth="1.300" />
      </g>
    </Brand>,
  ],
  [
    "Instagram",
    <Brand>
      <linearGradient id="ig" x1="0.200" y1="1" x2="0.800" y2="0">
        <stop offset="0" stopColor="#ffd05a" />
        <stop offset="0.350" stopColor="#f5533d" />
        <stop offset="0.650" stopColor="#d62a83" />
        <stop offset="1" stopColor="#7a3bd0" />
      </linearGradient>
      <rect width="30" height="30" rx="6" fill="url(#ig)" />
      <rect x="5" y="5" width="20" height="20" rx="6" stroke="#fff" strokeWidth="2.200" />
      <circle cx="15" cy="15" r="5" stroke="#fff" strokeWidth="2.200" />
      <circle cx="20.800" cy="9.200" r="1.500" fill="#fff" />
    </Brand>,
  ],
  [
    "Browser",
    <Brand>
      <Grad id="wv" stops={["#1ea8f0", "#1ff0b8"]} />
      <circle cx="15" cy="15" r="14" fill="#0d4553" />
      <path d="M1.200 16A14 14 0 0 1 15 1c-1 5-4 8-6 11-2 3-4 4-7.800 4z" fill="#12a5f0" />
      <path d="M11 16c-1-5 0-9 3-12 0 5 3 7 1.500 11L12 18z" fill="#cfe6ee" stroke="#0d3540" strokeWidth="0.800" />
      <path d="M1.500 19c5 0 8-3 10-5 0 3 1 5 3.500 5 3-1 5-4 8-7-1 5 1 7 5.500 7A14 14 0 0 1 1.500 19z" fill="url(#wv)" />
      <path d="M1.300 17A14 14 0 0 0 15 29c6 0 11-3.500 13-9-4 2-8 1-9-2-4 6-9 5-17.700-1z" fill="#22ddc4" />
    </Brand>,
  ],
  [
    "Steam",
    <Brand>
      <Grad id="sm" stops={["#14163a", "#10375f", "#1382b0"]} x2={0} />
      <circle cx="15" cy="15" r="14" fill="url(#sm)" />
      <path d="m1 15 8.500 3.500 6-6.500a5 5 0 1 1 4 5.500L13 22a4 4 0 0 1-8 .500L1.500 20z" fill="#fff" />
      <circle cx="19.500" cy="12" r="3.200" fill="#fff" stroke="#14304f" strokeWidth="1.300" />
      <circle cx="9.500" cy="21.500" r="2.500" stroke="#b8c4d0" strokeWidth="1" />
    </Brand>,
  ],
];

function Taskbar() {
  return (
    <footer className="grid h-[59px] shrink-0 grid-cols-[1fr_auto_1fr] items-center bg-[#202020] pb-px text-white">
      <button type="button" className="flex items-center pl-7 text-left text-sm">
        <span className="relative size-6 rounded-full bg-linear-to-br from-[#fbbd35] to-[#f0620c]">
          <span className="absolute -top-[10px] left-[11px] flex size-5 items-center justify-center rounded-full bg-[#fb8f9b] text-xs text-[#222]">
            1
          </span>
        </span>
        <span className="ml-3 flex flex-col leading-5">
          <span>91°F</span>
          <span className="text-[#bdbdbd]">Sunny</span>
        </span>
      </button>
      <div className="flex items-center">
        <button type="button" aria-label="Start" className="flex w-[55px] justify-center">
          <svg width="29" height="29" viewBox="0 0 29 29" aria-hidden="true">
            <Grad id="win" stops={["#7deaff", "#0a96f5"]} />
            <path d="M0 0h14v14H0zM15 0h14v14H15zM0 15h14v14H0zM15 15h14v14H15z" fill="url(#win)" />
          </svg>
        </button>
        <label className="ml-1 flex h-10 w-[275px] items-center gap-3 rounded-full border border-[#4c4c4c] bg-[#3c3c3c] pl-[14px]">
          <Svg w={19} h={19}>
            <circle cx="8" cy="8" r="6.500" strokeWidth="1.800" stroke="#e8e8e8" />
            <path d="m12.500 12.500 5.500 5.500" strokeWidth="2" stroke="#e8e8e8" />
          </Svg>
          <input
            aria-label="Taskbar search"
            placeholder="Search"
            className="min-w-0 flex-1 bg-transparent text-base outline-none placeholder:text-[#c8c8c8]"
          />
        </label>
        <span className="w-[3px]" />
        {APPS.map(([name, icon]) => (
          <button key={name} type="button" aria-label={name} className="flex h-[50px] w-[55px] flex-col items-center pt-[10px]">
            {icon}
            {(name === "Chrome" || name === "Steam") && <span className="mt-[5px] h-1 w-2 rounded-full bg-[#9a9a9a]" />}
          </button>
        ))}
        <button type="button" aria-label="Word" className="flex h-[50px] w-[55px]">
          <span className="ml-[3px] flex h-full w-11 flex-col items-center rounded-[6px] border border-[#3c3c3c] bg-[#2e2e2e] pt-[10px] pl-px">
            <WordIcon w={29} h={28} />
            <span className="mt-[6px] h-1 w-5 rounded-full bg-[#4cc2ff]" />
          </span>
          <span className="-ml-1 h-full w-[10px] rounded-r-[6px] border-y border-r border-[#363636]" />
        </button>
      </div>
      <div className="flex items-center justify-end pr-[26px]">
        <button type="button" aria-label="Show hidden icons" className="mr-[22px]">
          <Chevron w={15} className="rotate-180" />
        </button>
        <Svg w={20} h={16} className="mr-[10px]">
          <path d="M1 6C6 0 14 0 19 6M4 9c3.500-4 8.500-4 12 0M7 12c2-2 4-2 6 0" strokeWidth="1.600" />
          <circle cx="10" cy="14" r="1.500" fill="currentColor" stroke="none" />
        </Svg>
        <Svg w={21} h={18} className="mr-[9px]">
          <path d="M1 6.500h3.500L9 2v14l-4.500-4.500H1zM11.500 6c1.500 1.500 1.500 4.500 0 6M14 3.500c3 3 3 8 0 11M16.500 1c4.500 4 4.500 12 0 16" strokeWidth="1.400" />
        </Svg>
        <Svg w={20} h={17} className="mr-4">
          <path d="M3 12H1.500V4a2 2 0 0 1 2-2H15a2 2 0 0 1 2 2v7a2 2 0 0 1-2 2h-3M18.500 5.500v4" strokeWidth="1.700" />
          <path d="M3 5h3v3H3z" fill="currentColor" stroke="none" />
          <path d="M6.500 5 12 17H.500z" fill="currentColor" stroke="none" />
          <path d="M6.300 9.500v3.500M6.300 14v1.500" stroke="#202020" strokeWidth="1.300" />
        </Svg>
        <div className="mr-3 flex w-[74px] flex-col items-end text-sm leading-5">
          <span>4:21 PM</span>
          <span>8/27/2024</span>
        </div>
        <Svg w={17} h={20}>
          <path d="M2 15V9c0-5 3-7.500 6.500-7.500S15 4 15 9v6l1.500 2H.500z" fill="#fff" stroke="none" />
          <path d="M6 18c.5 2.500 4.500 2.500 5 0z" fill="#fff" stroke="none" />
          <path d="M5 7h3.500L5 11h3.500M10 5h3.500L10 9h3.500" stroke="#202020" strokeWidth="1.200" />
          <path d="M12.500.800H16L12.500 4.500H16" stroke="#fff" strokeWidth="1.200" />
        </Svg>
      </div>
    </footer>
  );
}

export default function App() {
  return (
    <div className="flex h-screen flex-col overflow-hidden bg-[#0a0a0a] font-['Noto_Sans',sans-serif]">
      <TitleBar />
      <TabRow />
      <Ribbon />
      <Document />
      <StatusBar />
      <Taskbar />
    </div>
  );
}
